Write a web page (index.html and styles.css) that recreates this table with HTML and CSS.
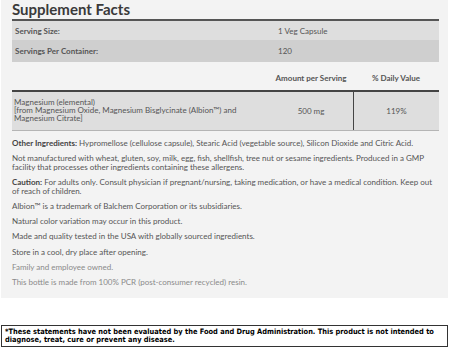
FILE: index.html
```html
<!DOCTYPE html>
<html>
<head>
<meta charset="utf-8">
<link rel="stylesheet" href="styles.css">
</head>
<body>
<div class="panel">
  <h2 class="title">Supplement Facts</h2>
  <div class="serving">
    <div class="srow r1"><span class="lbl">Serving Size:</span><span class="val">1 Veg Capsule</span></div>
    <div class="srow r2"><span class="lbl">Servings Per Container:</span><span class="val">120</span></div>
  </div>
  <div class="head">
    <span></span>
    <span class="hc">Amount per Serving</span>
    <span class="hc">% Daily Value</span>
  </div>
  <div class="nrow">
    <div class="nname">Magnesium (elemental)<br>[from Magnesium Oxide, Magnesium Bisglycinate (Albion™) and Magnesium Citrate]</div>
    <div class="namt">500 mg</div>
    <div class="ndv">119%</div>
  </div>
  <div class="notes">
    <p><b>Other Ingredients:</b> Hypromellose (cellulose capsule), Stearic Acid (vegetable source), Silicon Dioxide and Citric Acid.</p>
    <p>Not manufactured with wheat, gluten, soy, milk, egg, fish, shellfish, tree nut or sesame ingredients. Produced in a GMP facility that processes other ingredients containing these allergens.</p>
    <p><b>Caution:</b> For adults only. Consult physician if pregnant/nursing, taking medication, or have a medical condition. Keep out of reach of children.</p>
    <p>Albion™ is a trademark of Balchem Corporation or its subsidiaries.</p>
    <p>Natural color variation may occur in this product.</p>
    <p>Made and quality tested in the USA with globally sourced ingredients.</p>
    <p>Store in a cool, dry place after opening.</p>
    <p class="light">Family and employee owned.</p>
    <p class="light">This bottle is made from 100% PCR (post-consumer recycled) resin.</p>
  </div>
</div>
<div class="disclaimer">*These statements have not been evaluated by the Food and Drug Administration. This product is not intended to diagnose, treat, cure or prevent any disease.</div>
</body>
</html>
```
FILE: styles.css
```css
html, body { margin: 0; padding: 0; background: #fff; }
body { font-family: Lato, "Noto Sans", sans-serif; color: #555; width: 450px; }
.panel {
  background: #f3f3f3;
  margin: 0 2px 0 1px;
  padding: 0 9px 0 11px;
  height: 298px;
  box-sizing: border-box;
}
.title {
  margin: 0;
  font-size: 15px;
  font-weight: 700;
  color: #3a3a3a;
  line-height: 19px;
  height: 19px;
}
.serving { border-top: 2px solid #555; }
.srow {
  display: grid;
  grid-template-columns: 263px 1fr;
  font-size: 8px;
  align-items: center;
  padding-left: 3px;
}
.srow.r1 { background: #dedede; height: 19px; }
.srow.r2 { background: #cfcfcf; height: 22px; }
.lbl { font-weight: 700; }
.head {
  display: grid;
  grid-template-columns: 1fr 84px 86px;
  height: 28px;
  align-items: center;
  font-size: 8px;
  font-weight: 700;
  padding-top: 4px;
  box-sizing: border-box;
}
.hc { text-align: center; }
.nrow {
  display: grid;
  grid-template-columns: 1fr 84px 86px;
  background: #dedede;
  border-top: 2px solid #444;
  border-bottom: 1px solid #b5b5b5;
  height: 41px;
  box-sizing: border-box;
  font-size: 8px;
}
.nname { padding: 6px 0 0 2px; line-height: 8px; }
.namt, .ndv { display: flex; align-items: center; justify-content: center; }
.ndv { border-left: 1px solid #444; }
.notes { padding-top: 8px; font-size: 8px; line-height: 8.5px; }
.notes p { margin: 0 0 6.75px 0; }
.notes b { color: #444; }
.notes .light { color: #8a8a8a; }
.disclaimer {
  margin: 27px 2px 0 1px;
  border: 1px solid #333;
  padding: 2px 3px;
  font-family: "DejaVu Sans Condensed", "DejaVu Sans", sans-serif;
  font-size: 7.4px;
  line-height: 8px;
  font-weight: 700;
  color: #000;
  height: 22px;
  box-sizing: border-box;
}
```
